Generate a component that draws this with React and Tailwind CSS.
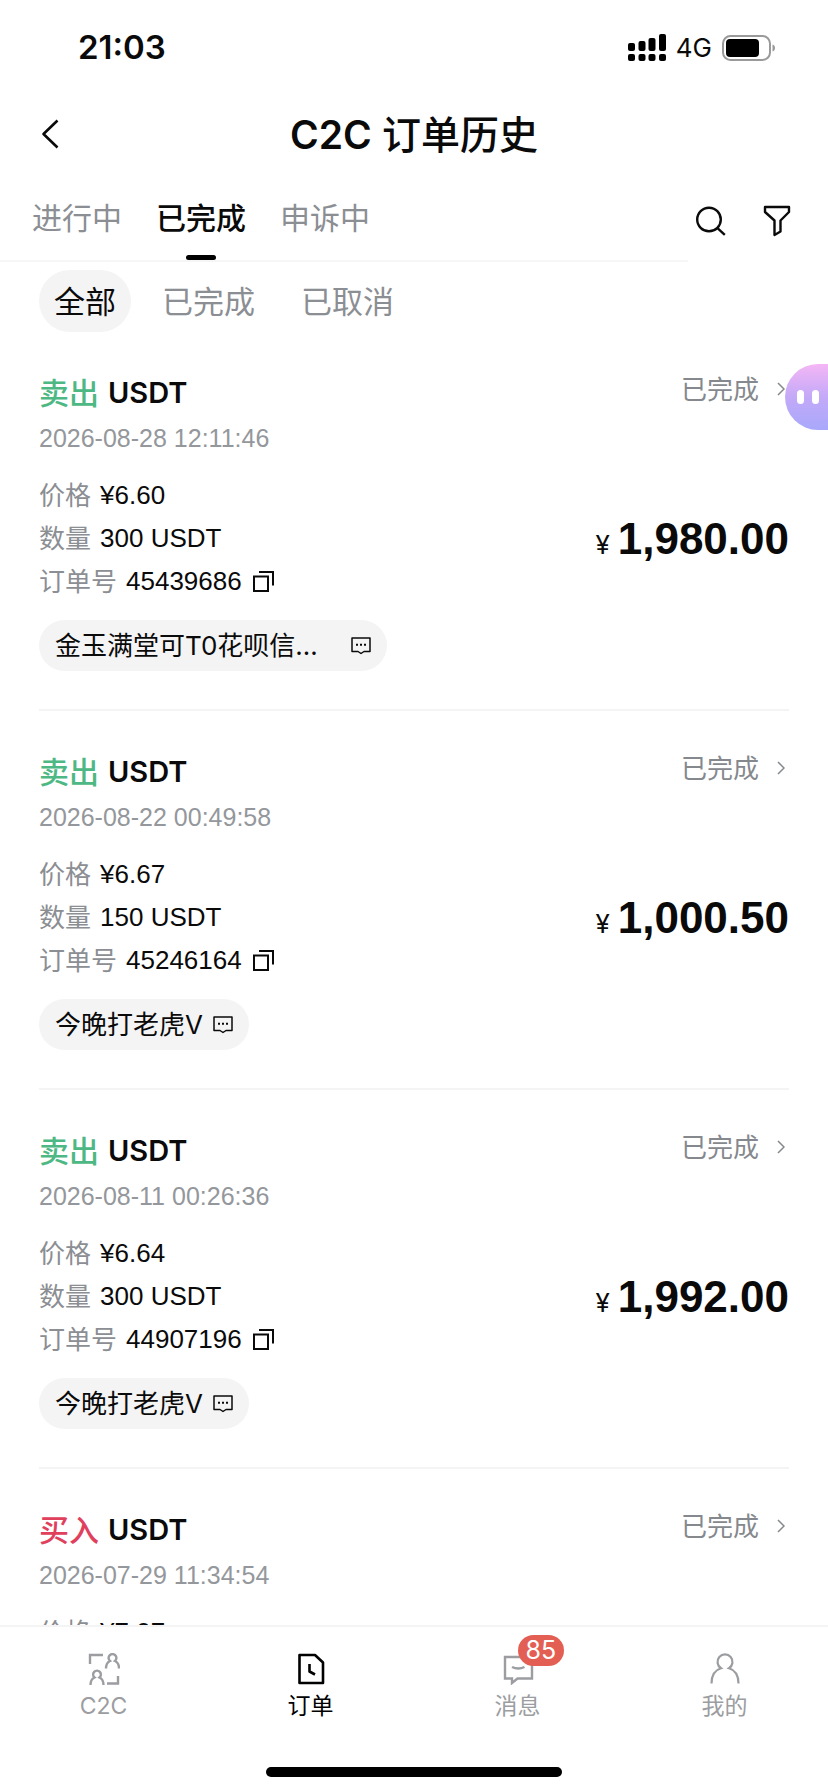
import { useState } from 'react'
import clsx from 'clsx'

const TABS = ['进行中', '已完成', '申诉中']
const FILTERS = ['全部', '已完成', '已取消']

const ORDERS = [
  { id: '45439686', side: 'sell', time: '2026-08-28 12:11:46', price: '6.60', amount: '300', total: '1,980.00', merchant: '金玉满堂可T0花呗信用卡秒到', wide: true },
  { id: '45246164', side: 'sell', time: '2026-08-22 00:49:58', price: '6.67', amount: '150', total: '1,000.50', merchant: '今晚打老虎V' },
  { id: '44907196', side: 'sell', time: '2026-08-11 00:26:36', price: '6.64', amount: '300', total: '1,992.00', merchant: '今晚打老虎V' },
  { id: '44560318', side: 'buy', time: '2026-07-29 11:34:54', price: '7.07', amount: '300', total: '2,121.00', merchant: '今晚打老虎V' },
]

function SignalIcon() {
  return (
    <svg width="38" height="28" viewBox="0 0 38 28" aria-hidden="true">
      <rect x="0" y="9" width="7" height="8" rx="2" />
      <rect x="10.5" y="7" width="7" height="10" rx="2" />
      <rect x="20.5" y="4" width="7" height="13" rx="2" />
      <rect x="31" y="0" width="7" height="17" rx="2" />
      <rect x="0" y="20" width="7" height="7" rx="2" />
      <rect x="10.5" y="20" width="7" height="7" rx="2" />
      <rect x="20.5" y="20" width="7" height="7" rx="2" />
      <rect x="31" y="20" width="7" height="7" rx="2" />
    </svg>
  )
}

function BatteryIcon() {
  return (
    <svg width="54" height="26" viewBox="0 0 54 26" aria-hidden="true">
      <rect x="1" y="1" width="47" height="24" rx="7.5" fill="none" stroke="#9a9a9a" strokeWidth="2" />
      <rect x="4" y="4" width="33" height="18" rx="4" />
      <path d="M50.5 9.5c1.7.5 2.5 1.9 2.5 3.5s-.8 3-2.5 3.5z" fill="#9a9a9a" />
    </svg>
  )
}

function BackIcon() {
  return (
    <svg width="18" height="30" viewBox="0 0 18 30" fill="none" stroke="currentColor" strokeWidth="2.6" strokeLinejoin="round" aria-hidden="true">
      <path d="M16.5 1.5 2.5 15l14 13.5" />
    </svg>
  )
}

function SearchIcon() {
  return (
    <svg width="30" height="30" viewBox="0 0 30 30" fill="none" stroke="currentColor" strokeWidth="2.4" aria-hidden="true">
      <circle cx="13" cy="13.5" r="11.8" />
      <path d="m21.2 21.8 7.6 7" />
    </svg>
  )
}

function FilterIcon() {
  return (
    <svg width="28" height="32" viewBox="0 0 28 32" fill="none" stroke="currentColor" strokeWidth="2.4" strokeLinejoin="round" aria-hidden="true">
      <path d="M2 2h24v5l-8.5 8.500V26.500L11.500 30V15.500L2 7z" />
    </svg>
  )
}

function ChevronIcon() {
  return (
    <svg width="8" height="14" viewBox="0 0 8 14" fill="none" stroke="currentColor" strokeWidth="1.5" aria-hidden="true">
      <path d="m1 1 6 6-6 6" />
    </svg>
  )
}

function CopyIcon() {
  return (
    <svg width="21" height="21" viewBox="0 0 21 21" fill="none" stroke="currentColor" strokeWidth="2" aria-hidden="true">
      <path d="M1 5.5h14V20H1z" />
      <path d="M6 1h14v13.5" />
    </svg>
  )
}

function ChatIcon() {
  return (
    <svg width="20" height="18" viewBox="0 0 20 18" fill="none" stroke="currentColor" strokeWidth="1.5" strokeLinejoin="round" aria-hidden="true">
      <path d="M1 1h18v13.5h-6L10 16.5l-3-2H1z" />
      <path d="M5 7.8h2M9 7.8h2M13 7.8h2" strokeWidth="2" />
    </svg>
  )
}

function C2cIcon() {
  return (
    <svg width="32" height="32" viewBox="0 0 32 32" fill="none" stroke="currentColor" strokeWidth="2.4" aria-hidden="true">
      <path d="M2 11V2h13" />
      <path d="M30 23v7.5H19" />
      <path d="M18 15.500c0-4 1.400-6.300 4-7.500a3.900 3.900 0 1 1 5 0c2.600 1.200 4 3.500 4 7.500" />
      <path d="M2.500 32c0-4 1.400-6.300 4-7.500a3.900 3.900 0 1 1 5 0c2.600 1.200 4 3.500 4 7.500" />
    </svg>
  )
}

function OrdersIcon() {
  return (
    <svg width="32" height="32" viewBox="0 0 32 32" fill="none" stroke="currentColor" strokeWidth="2.6" strokeLinejoin="round" aria-hidden="true">
      <path d="M4.5 2H20l8 7.5V30H4.5z" />
      <path d="M14.5 11v7.5l5.5 3" />
    </svg>
  )
}

function MessageIcon() {
  return (
    <svg width="32" height="32" viewBox="0 0 32 32" fill="none" stroke="currentColor" strokeWidth="2.4" aria-hidden="true">
      <path d="M3 4h27v21.5H15.5L10 30v-4.5H3z" />
      <path d="M10 14c4 2 8.5 2 12.5 0" />
    </svg>
  )
}

function ProfileIcon() {
  return (
    <svg width="32" height="32" viewBox="0 0 32 32" fill="none" stroke="currentColor" strokeWidth="2.2" aria-hidden="true">
      <path d="M2.500 30.500C2.500 22.500 6 17 12 15.200A7.500 7.500 0 1 1 20 15.200C26 17 29.500 22.500 29.500 30.500" />
    </svg>
  )
}

const NAV_ITEMS = [
  { label: 'C2C', icon: C2cIcon },
  { label: '订单', icon: OrdersIcon, active: true },
  { label: '消息', icon: MessageIcon, badge: 85 },
  { label: '我的', icon: ProfileIcon },
]

function StatusBar() {
  return (
    <div className="flex h-[92px] shrink-0 items-center justify-between pl-[78px] pr-[52px] pt-[3px]">
      <span className="text-[33px] font-semibold">21:03</span>
      <div className="flex items-center gap-[10px]">
        <SignalIcon />
        <span className="text-[26px]">4G</span>
        <BatteryIcon />
      </div>
    </div>
  )
}

function Detail({ label, children }) {
  return (
    <div className="flex items-center gap-[9px]">
      <dt className="text-[#8b8e93]">{label}</dt>
      <dd className="flex items-center gap-[11px] font-['Liberation_Sans',sans-serif]">{children}</dd>
    </div>
  )
}

function OrderCard({ order }) {
  const selling = order.side === 'sell'

  return (
    <li className="border-b-2 border-[#f4f4f5] pb-[38px] pt-[41px]">
      <div className="flex items-start justify-between">
        <h2 className="flex h-10 items-center gap-[9px] text-[29px] font-semibold">
          <span className={clsx('text-[30px] font-medium', selling ? 'text-[#4db883]' : 'text-[#e0405c]')}>{selling ? '卖出' : '买入'}</span>
          USDT
        </h2>
        <a href={`#order-${order.id}`} className="flex h-8 items-center gap-[18px] pr-1 text-[26px] text-[#85888d]">
          已完成
          <ChevronIcon />
        </a>
      </div>
      <time className="mt-[7px] block font-['Liberation_Sans',sans-serif] text-[25px] leading-9 text-[#94979b]">{order.time}</time>

      <div className="mt-[18px] flex items-center justify-between">
        <dl className="text-[26px] leading-[43px]">
          <Detail label="价格">¥{order.price}</Detail>
          <Detail label="数量">{order.amount} USDT</Detail>
          <Detail label="订单号">
            {order.id}
            <button type="button" aria-label="复制订单号"><CopyIcon /></button>
          </Detail>
        </dl>
        <p className="flex items-baseline gap-2">
          <span className="text-[26px]">¥</span>
          <span className="font-['Liberation_Sans',sans-serif] text-[44px] font-bold">{order.total}</span>
        </p>
      </div>

      <button type="button" className={clsx('mt-[17px] flex h-[51px] items-center rounded-full bg-[#f4f4f5] px-4 text-[26px]', order.wide ? 'gap-6' : 'gap-[10px]')}>
        <span className="max-w-[272px] truncate">{order.merchant}</span>
        <ChatIcon />
      </button>
    </li>
  )
}

export default function App() {
  const [tab, setTab] = useState('已完成')
  const [filter, setFilter] = useState('全部')

  return (
    <div className="relative flex h-screen flex-col overflow-hidden bg-white font-['Inter','Noto_Sans_CJK_SC',sans-serif] text-[#0a0a0a]">
      <StatusBar />

      <header className="grid h-[84px] shrink-0 grid-cols-[60px_1fr_60px] items-center px-[41px]">
        <button type="button" aria-label="返回"><BackIcon /></button>
        <h1 className="pt-[2px] text-center text-[39px] font-medium">
          <span className="font-semibold">C2C</span> 订单历史
        </h1>
      </header>

      <div className="flex shrink-0">
        <div role="tablist" className="flex flex-1 gap-[34px] border-b-2 border-[#f6f6f7] pl-8">
          {TABS.map(name => (
            <button
              key={name}
              type="button"
              role="tab"
              aria-selected={tab === name}
              onClick={() => setTab(name)}
              className={clsx('relative h-[84px] text-[30px]', tab === name ? 'font-medium' : 'text-[#8b8e93]')}
            >
              {name}
              {tab === name && <span className="absolute bottom-0 left-1/2 h-[5px] w-[30px] -translate-x-1/2 rounded-full bg-black" />}
            </button>
          ))}
        </div>
        <div className="flex w-[140px] items-center gap-[37px] pl-2 pt-[3px]">
          <button type="button" aria-label="搜索"><SearchIcon /></button>
          <button type="button" aria-label="筛选"><FilterIcon /></button>
        </div>
      </div>

      <div className="flex shrink-0 gap-4 px-[39px] pt-2">
        {FILTERS.map(name => (
          <button
            key={name}
            type="button"
            onClick={() => setFilter(name)}
            className={clsx('h-[62px] rounded-full px-[15px] pt-[3px] text-[31px]', filter === name ? 'bg-[#f4f4f5]' : 'text-[#8b8e93]')}
          >
            {name}
          </button>
        ))}
      </div>

      <ul className="min-h-0 flex-1 overflow-hidden px-[39px]">
        {ORDERS.map(order => <OrderCard key={order.id} order={order} />)}
      </ul>

      <nav className="flex h-[167px] shrink-0 flex-col justify-between border-t-2 border-[#f4f4f5] pb-[15px]">
        <div className="grid grid-cols-4 pt-[26px]">
          {NAV_ITEMS.map(({ label, icon: Icon, active, badge }) => (
            <a key={label} href={`#${label}`} className={clsx('flex flex-col items-center gap-[3px] text-[23px] leading-9', active ? 'text-black' : 'text-[#9b9da1]')}>
              <span className="relative">
                <Icon />
                {badge && (
                  <span className="absolute -top-[18px] left-4 rounded-full bg-[#e45f53] px-2 text-[25px] leading-[31px] text-white">{badge}</span>
                )}
              </span>
              {label}
            </a>
          ))}
        </div>
        <div className="h-[10px] w-[296px] self-center rounded-full bg-black" />
      </nav>

      <button
        type="button"
        aria-label="客服助手"
        className="absolute right-0 top-[364px] flex h-[66px] w-[43px] items-center gap-2 rounded-l-full bg-linear-to-b from-[#f4b6f5] via-[#c3a9f8] to-[#a8a8fb] pl-3"
      >
        <span className="h-[14px] w-[7px] rounded-full bg-white" />
        <span className="h-[14px] w-[7px] rounded-full bg-white" />
      </button>
    </div>
  )
}
